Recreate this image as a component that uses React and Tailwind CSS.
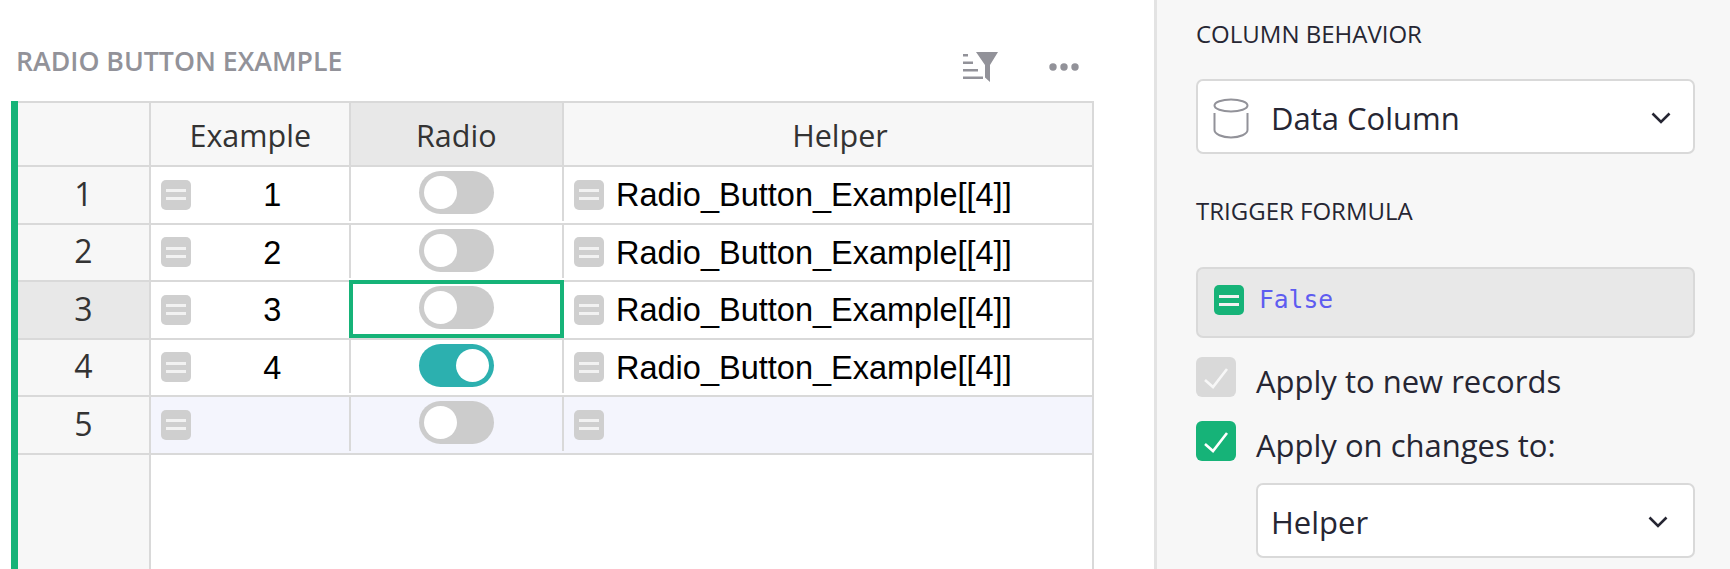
const UI = 'font-["Open_Sans","Noto_Sans",sans-serif]';

const rows = [
  { n: 1, value: '1', helper: 'Radio_Button_Example[[4]]' },
  { n: 2, value: '2', helper: 'Radio_Button_Example[[4]]' },
  { n: 3, value: '3', helper: 'Radio_Button_Example[[4]]', selected: true },
  { n: 4, value: '4', helper: 'Radio_Button_Example[[4]]', on: true },
  { n: 5, value: '', helper: '', isNew: true },
];

function EqChip({ green }) {
  return (
    <div className={`flex h-[30px] w-[30px] shrink-0 flex-col items-center justify-center gap-[5px] rounded-[5px] ${green ? 'bg-[#16b378]' : 'bg-[#cfcfcf]'}`}>
      <div className="h-[3px] w-[20px] bg-[#f2f2f2]" />
      <div className="h-[3px] w-[20px] bg-[#f2f2f2]" />
    </div>
  );
}

function Toggle({ on }) {
  return (
    <div className={`flex h-[43px] w-[75px] items-center rounded-full px-[5px] ${on ? 'justify-end bg-[#2cb0af]' : 'bg-[#cccccc]'}`}>
      <div className="h-[33px] w-[33px] rounded-full bg-white" />
    </div>
  );
}

function Chevron() {
  return (
    <svg width="20" height="12" viewBox="0 0 20 12" fill="none" stroke="#262633" strokeWidth="2.6" className="mt-[3px] shrink-0">
      <path d="M1.5 1.5 L10 10 L18.5 1.5" />
    </svg>
  );
}

function Check({ color }) {
  return (
    <svg width="40" height="40" viewBox="0 0 40 40" fill="none" stroke={color} strokeWidth="2.6">
      <path d="M9 23 L17 30 L31 12" />
    </svg>
  );
}

function Row({ row }) {
  return (
    <div className={`grid h-[57.5px] shrink-0 grid-cols-[133px_199.5px_213.5px_1fr] border-b-2 border-[#d9d9d9] ${row.isNew ? 'bg-[#f4f5fd]' : 'bg-white'}`}>
      <div className={`flex items-center justify-center border-r-2 border-[#d9d9d9] pb-[2px] text-[32px] text-[#333333] ${UI} ${row.selected ? 'bg-[#e8e8e8]' : 'bg-[#f7f7f7]'}`}>
        {row.n}
      </div>
      <div className="mb-[2px] flex items-center border-r-2 border-[#d9d9d9] pl-[10px] pt-[2px]">
        <EqChip />
        <span className="flex-1 pl-[5px] pt-[2px] text-center font-['Liberation_Sans',sans-serif] text-[32.5px] text-black">{row.value}</span>
      </div>
      <div className="relative mb-[2px] flex items-start justify-center border-r-2 border-[#d9d9d9] pt-[4px]">
        <Toggle on={row.on} />
        {row.selected && (
          <div className="absolute -top-[2px] -right-[2px] -bottom-[2px] -left-[2px] border-4 border-[#16b378]" />
        )}
      </div>
      <div className="mb-[2px] flex items-center gap-[12px] pl-[10px] pt-[2px]">
        <EqChip />
        <span className="pt-[2px] font-['Liberation_Sans',sans-serif] text-[32.5px] text-black">{row.helper}</span>
      </div>
    </div>
  );
}

function Table() {
  return (
    <div className="flex flex-1 flex-col border-l-7 border-[#16b378]">
      <div className="flex flex-1 flex-col border-t-2 border-r-2 border-[#d9d9d9]">
        <div className={`grid h-[64px] shrink-0 grid-cols-[133px_199.5px_213.5px_1fr] border-b-2 border-[#d9d9d9] bg-[#f7f7f7] text-[30.5px] text-[#333333] ${UI}`}>
          <div className="border-r-2 border-[#d9d9d9]" />
          <div className="flex items-center justify-center border-r-2 border-[#d9d9d9] pl-[1px] pt-[3px]">Example</div>
          <div className="flex items-center justify-center border-r-2 border-[#d9d9d9] bg-[#e8e8e8] pt-[3px]">Radio</div>
          <div className="flex items-center justify-center pl-[24px] pt-[3px]">Helper</div>
        </div>
        {rows.map((row) => (
          <Row key={row.n} row={row} />
        ))}
        <div className="w-[133px] flex-1 border-r-2 border-[#d9d9d9] bg-[#f7f7f7]" />
      </div>
    </div>
  );
}

function Select({ children, className }) {
  return (
    <div className={`flex h-[75px] items-center rounded-[7px] border-2 border-[#d9d9d9] bg-white text-[31px] text-[#262633] ${className}`}>
      {children}
    </div>
  );
}

function Panel() {
  return (
    <div className={`flex w-[576px] shrink-0 flex-col border-l-3 border-[#e3e3e3] bg-[#f7f7f7] pl-[39px] pr-[35px] text-[#262633] ${UI}`}>
      <div className="mt-[18px] text-[24px] leading-[32px]">COLUMN BEHAVIOR</div>
      <Select className="mt-[29px] pl-[14px] pr-[22px]">
        <svg width="38" height="41" viewBox="0 0 38 41" fill="none" stroke="#929299" strokeWidth="2" className="mt-[3px] shrink-0">
          <ellipse cx="19" cy="7.5" rx="16.5" ry="6" />
          <path d="M2.5 15 V32 C2.5 36 10 39.5 19 39.5 C28 39.5 35.5 36 35.5 32 V15" />
        </svg>
        <span className="ml-[21px] flex-1 pt-[4px]">Data Column</span>
        <Chevron />
      </Select>
      <div className="mt-[41px] text-[24px] leading-[32px]">TRIGGER FORMULA</div>
      <div className="mt-[40px] flex h-[71px] items-start gap-[15px] rounded-[7px] border-2 border-[#d9d9d9] bg-[#e8e8e8] pl-[16px] pt-[16px]">
        <EqChip green />
        <span className="font-['DejaVu_Sans_Mono',monospace] text-[24.6px] leading-[30px] text-[#5e5cf0]">False</span>
      </div>
      <div className="mt-[19px] flex h-[40px] items-center gap-[20px]">
        <div className="h-[40px] w-[40px] rounded-[6px] bg-[#d9d9d9]">
          <Check color="#f7f7f7" />
        </div>
        <span className="pt-[8px] text-[31px]">Apply to new records</span>
      </div>
      <div className="mt-[24px] flex h-[40px] items-center gap-[20px]">
        <div className="h-[40px] w-[40px] rounded-[6px] bg-[#16b378]">
          <Check color="#ffffff" />
        </div>
        <span className="pt-[8px] text-[31px]">Apply on changes to:</span>
      </div>
      <Select className="mt-[22px] ml-[60px] pl-[13px] pr-[25px]">
        <span className="flex-1 pt-[4px]">Helper</span>
        <Chevron />
      </Select>
    </div>
  );
}

export default function App() {
  return (
    <div className="flex h-[569px] w-[1730px] overflow-hidden bg-white">
      <div className="flex flex-1 flex-col pl-[11px] pr-[60px]">
        <div className="flex h-[101px] shrink-0 items-start justify-between pl-[5px] pr-[15px] pt-[43px]">
          <span className={`text-[26.7px] font-semibold leading-[35px] text-[#929299] ${UI}`}>RADIO BUTTON EXAMPLE</span>
          <div className="flex items-start gap-[50px] pt-[9px]">
            <svg width="36" height="30" viewBox="0 0 36 30" fill="#929299">
              <rect x="0" y="2" width="5" height="2.5" />
              <rect x="0" y="9.5" width="10" height="2.5" />
              <rect x="0" y="17" width="15" height="2.5" />
              <rect x="0" y="24.5" width="20" height="2.5" />
              <path d="M13 0 H35 L27 13 V30 L22 25.5 V13 Z" />
            </svg>
            <svg width="30" height="8" viewBox="0 0 30 8" fill="#929299" className="mt-[11px]">
              <circle cx="4" cy="4" r="3.7" />
              <circle cx="15" cy="4" r="3.7" />
              <circle cx="26" cy="4" r="3.7" />
            </svg>
          </div>
        </div>
        <Table />
      </div>
      <Panel />
    </div>
  );
}
